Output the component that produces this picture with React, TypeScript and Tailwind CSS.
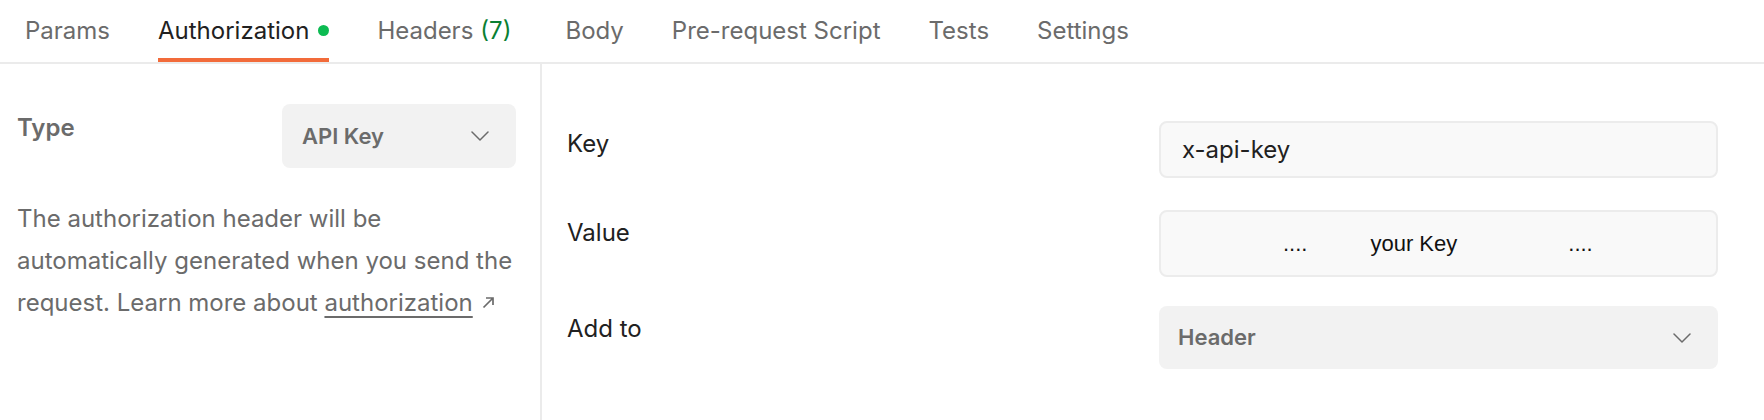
import React from "react";

const Chevron = () => (
  <svg width="18" height="10" viewBox="0 0 18 10" fill="none" className="shrink-0">
    <polyline points="1,1 9,9 17,1" stroke="#6b6b6b" strokeWidth="1.5" strokeLinecap="round" strokeLinejoin="round" />
  </svg>
);

const tabs = [
  { id: "params", label: "Params" },
  { id: "auth", label: "Authorization", active: true, dot: true },
  { id: "headers", label: "Headers", count: "(7)" },
  { id: "body", label: "Body" },
  { id: "pre", label: "Pre-request Script" },
  { id: "tests", label: "Tests" },
  { id: "settings", label: "Settings" },
];

const TabBar = () => (
  <div className="flex h-[64px] border-b-2 border-[#ebebeb] pl-[1px]">
    {tabs.map((tab) => (
      <div key={tab.id} className={`flex flex-col px-[24px] ${tab.count ? "pr-[30px]" : ""}`}>
        <div
          className={`flex flex-1 items-center pt-[3px] text-[24px] whitespace-nowrap ${
            tab.active ? "text-[#212121]" : "text-[#6b6b6b]"
          }`}
        >
          {tab.label}
          {tab.count && <span className="ml-[7px] text-[#0a7f33]">{tab.count}</span>}
          {tab.dot && <span className="ml-[9px] w-[11px] h-[11px] rounded-full bg-[#0cbb52]" />}
        </div>
        <div className={`h-[4px] ${tab.active ? "bg-[#f26b3a]" : "bg-transparent"}`} />
      </div>
    ))}
  </div>
);

const Field = ({ label, children }: { label: string; children: React.ReactNode }) => (
  <div className="flex items-start">
    <div className="flex-1 mt-[7px] text-[24px] leading-[32px] text-[#212121]">{label}</div>
    {children}
  </div>
);

export default function App() {
  return (
    <div className="w-[1764px] h-[420px] overflow-hidden bg-white font-['Inter',sans-serif]">
      <TabBar />
      <div className="flex h-[356px]">
        <div className="w-[542px] shrink-0 border-r-2 border-[#ebebeb] pl-[17px] pr-[20px] pt-[40px]">
          <div className="flex items-start justify-between">
            <div className="mt-[8px] text-[24px] leading-[32px] font-semibold text-[#6b6b6b]">Type</div>
            <div className="mr-[4px] flex w-[234px] h-[64px] items-center justify-between rounded-lg bg-[#f2f2f2] pl-[20px] pr-[27px]">
              <span className="text-[22px] font-semibold text-[#6b6b6b]">API Key</span>
              <Chevron />
            </div>
          </div>
          <p className="mt-[30px] text-[24px] leading-[42px] text-[#6b6b6b] whitespace-nowrap">
            The authorization header will be
            <br />
            automatically generated when you send the
            <br />
            request. Learn more about{" "}
            <span className="underline decoration-[1.5px] underline-offset-[5px]">authorization</span>
            <svg width="13" height="13" viewBox="0 0 13 13" fill="none" className="inline-block ml-[9px] mb-[4px]">
              <path d="M1.5 11.5 L11 2 M4 2 H11 V9" stroke="#6b6b6b" strokeWidth="1.7" />
            </svg>
          </p>
        </div>
        <div className="flex-1 pl-[25px] pr-[46px] pt-[57px]">
          <Field label="Key">
            <div className="flex w-[559px] h-[57px] items-center rounded-lg border-2 border-[#ececec] bg-[#f9f9f9] px-[21px] text-[24px] text-[#212121]">
              x-api-key
            </div>
          </Field>
          <div className="mt-[32px]">
            <Field label="Value">
              <div className="flex w-[559px] h-[67px] items-center rounded-lg border-2 border-[#ececec] bg-[#f9f9f9] pl-[122px] font-['Liberation_Sans',Arial,sans-serif] text-[22px] text-[#111111] whitespace-nowrap">
                <span>....</span>
                <span className="ml-[63px]">your Key</span>
                <span className="ml-[111px]">....</span>
              </div>
            </Field>
          </div>
          <div className="mt-[29px]">
            <Field label="Add to">
              <div className="flex w-[559px] h-[63px] items-center justify-between rounded-lg bg-[#f2f2f2] pl-[19px] pr-[27px]">
                <span className="text-[22px] font-semibold text-[#6b6b6b]">Header</span>
                <Chevron />
              </div>
            </Field>
          </div>
        </div>
      </div>
    </div>
  );
}
